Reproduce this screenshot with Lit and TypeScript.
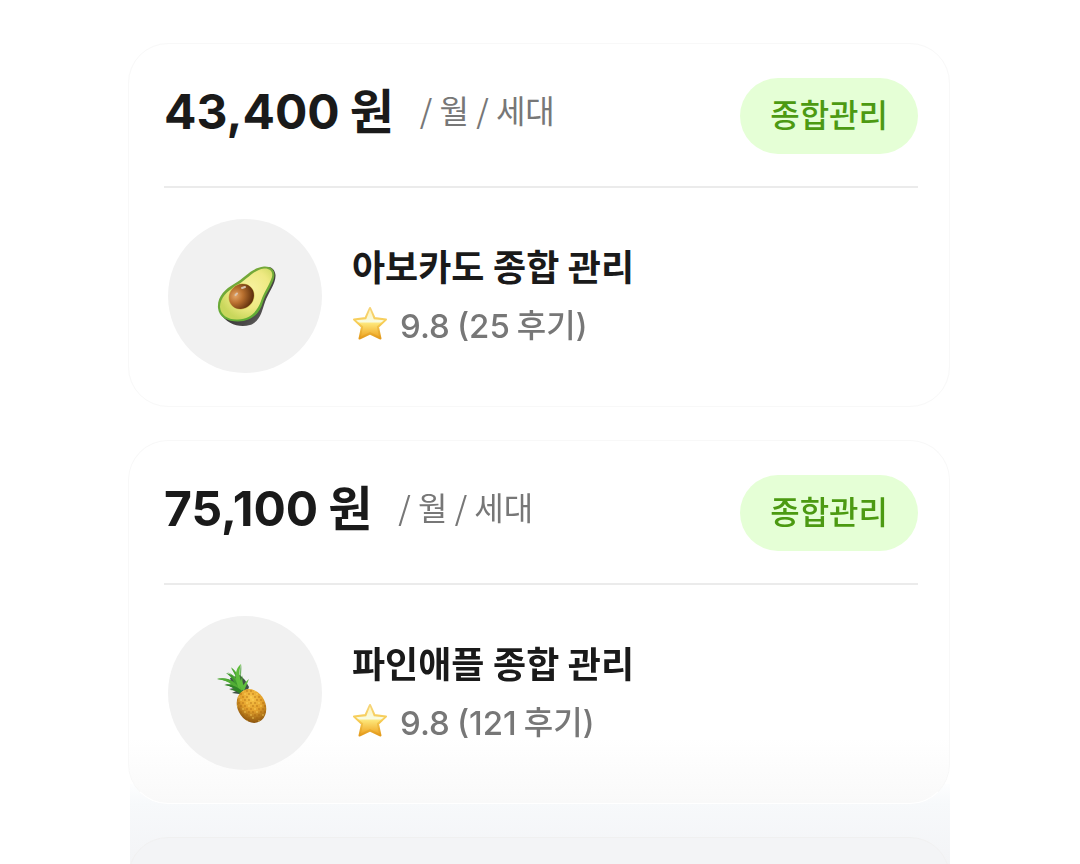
import { LitElement, html, css, svg, TemplateResult } from "lit";
import { customElement, property } from "lit/decorators.js";

interface Offer {
  price: string;
  name: string;
  score: string;
  reviews: number;
  art: TemplateResult;
}

const avocado = html`
  <svg viewBox="0 1 80 80" width="80" height="80" aria-hidden="true">
    <defs>
      <linearGradient id="skin" x1="0" y1="0" x2="1" y2="1">
        <stop offset="0.3" stop-color="#2d2b2b" />
        <stop offset="0.7" stop-color="#4b4948" />
        <stop offset="1" stop-color="#777" />
      </linearGradient>
      <linearGradient id="rim" x1="0.2" y1="0" x2="0.6" y2="1">
        <stop offset="0" stop-color="#7aa63a" />
        <stop offset="1" stop-color="#5fae35" />
      </linearGradient>
      <radialGradient id="flesh" cx="0.58" cy="0.4" r="0.62">
        <stop offset="0" stop-color="#f8f2a0" />
        <stop offset="0.6" stop-color="#eee982" />
        <stop offset="1" stop-color="#c9d75c" />
      </radialGradient>
      <radialGradient id="pit" cx="0.36" cy="0.3" r="0.75">
        <stop offset="0" stop-color="#e5a566" />
        <stop offset="0.4" stop-color="#b9702f" />
        <stop offset="1" stop-color="#562909" />
      </radialGradient>
    </defs>
    <path fill="url(#skin)" d="M15 58C22 69 34 73 45 70C56 66 57 55 60 47C63 38 71 29 70.500 20C70 15 67 12 63 12Z" />
    <path fill="url(#rim)" d="M13 53C12 42 20 34 29 29C41 22 46 13 59 11.500C66 11 71 15 69 23C67 31 61 38 58 47C55 58 47 66.500 33 66.500C22 66.500 14 62 13 53Z" />
    <path fill="url(#flesh)" d="M15 52C15 43 22 36 31 31C42 25 48 15 59 13.500C64 13 68.500 16 67 22C64 31 59 37 56 46C52 57 45 64 33 64.500C23 65 15.500 60 15 52Z" />
    <ellipse cx="36.500" cy="41.500" rx="13.500" ry="12.400" fill="#cfbc4c" transform="rotate(-45 36.500 41.500)" />
    <ellipse cx="36.500" cy="41.500" rx="13" ry="11.800" fill="url(#pit)" transform="rotate(-45 36.500 41.500)" />
    <path stroke="#d9c2ad" stroke-width="2" stroke-linecap="round" fill="none" d="M37 33L40 32M30.500 40L32 38.500" />
  </svg>
`;

const seeds = Array.from({ length: 96 }, (_, i) => {
  const row = Math.floor(i / 8);
  const col = i % 8;
  return svg`<circle
    cx=${32 + col * 4 + (row % 2) * 2}
    cy=${33 + row * 3}
    r="0.900"
    fill=${(row * 2 + col) % 3 ? "#a8640f" : "#ffdb66"}
  />`;
});

const pineapple = html`
  <svg viewBox="0 -2 80 80" width="80" height="80" aria-hidden="true">
    <defs>
      <radialGradient id="fruit" cx="0.62" cy="0.3" r="0.75">
        <stop offset="0" stop-color="#f9c548" />
        <stop offset="0.5" stop-color="#e3a02b" />
        <stop offset="1" stop-color="#86500c" />
      </radialGradient>
      <clipPath id="fruit-shape">
        <ellipse cx="46.500" cy="51" rx="14" ry="17.500" transform="rotate(-27 46.500 51)" />
      </clipPath>
    </defs>
    <path fill="#3f5145" d="M20 29L27 30L25 23L35 20L40 25L44 32L42 37L34 39L27 38L31 36L24 34L29 33Z" />
    <path fill="#3f9a2e" d="M35 38C29 33 24 30 19 30L27 29C23 26 18 25 12 24C19 22 25 24 29 27C27 23 24 20 21 18C27 19 31 22 33 27C31 22 29 17 26 13C31 16 34 21 36 27C35 20 35 15 36 9C37 16 35 20 37 26Z" />
    <path fill="#52ad35" d="M12 24C22 22 31 27 37 36L33 37C27 28 21 25 12 24ZM22 17C30 20 36 27 38 35L34 34C32 26 28 20 22 17ZM26 12C32 17 36 24 38 33H34C34 25 30 18 26 12Z" />
    <path fill="#5fbd3c" d="M36 9C30 14 29 22 34 34L38 33C35 24 33 18 36 9ZM34 31L39 36L44 24C39 28 37 32 37 36ZM38 20C35 26 35 31 38 36L40 33C37 28 37 24 38 20Z" />
    <path fill="#2f8426" d="M20 30C27 29 33 32 38 37L34 38C30 33 26 31 20 30ZM25 35C30 33 35 34 39 38L35 39C32 36 29 35 25 35Z" />
    <ellipse cx="46.500" cy="51" rx="14" ry="17.500" fill="url(#fruit)" transform="rotate(-27 46.500 51)" />
    <g clip-path="url(#fruit-shape)" opacity="0.5">${seeds}</g>
  </svg>
`;

const star = html`
  <svg class="star" viewBox="0 0 36 36" width="36" height="36" aria-hidden="true">
    <defs>
      <linearGradient id="gold" x1="0" y1="0" x2="0" y2="1">
        <stop offset="0" stop-color="#f6d478" />
        <stop offset="0.5" stop-color="#f7cd55" />
        <stop offset="1" stop-color="#e39a1c" />
      </linearGradient>
      <linearGradient id="shine" x1="0" y1="0" x2="0" y2="1">
        <stop offset="0" stop-color="#fff3b8" />
        <stop offset="0.45" stop-color="#f8fbe0" />
        <stop offset="0.52" stop-color="#fde577" />
        <stop offset="1" stop-color="#f0a928" />
      </linearGradient>
    </defs>
    <path fill="url(#gold)" stroke="url(#gold)" stroke-width="2" stroke-linejoin="round" d="M18 2L22.500 12L34 13.500L26 21L28.500 32.500L18 27.500L7.500 32.500L10 21L2 13.500L13.500 12Z" />
    <path fill="url(#shine)" d="M18 3.500L21.800 13.300L32 14.300L24.800 20.500L27 30.500L18 26L9 30.500L11.200 20.500L4 14.300L14.200 13.300Z" />
  </svg>
`;

const offers: Offer[] = [
  { price: "43,400", name: "아보카도 종합 관리", score: "9.8", reviews: 25, art: avocado },
  { price: "75,100", name: "파인애플 종합 관리", score: "9.8", reviews: 121, art: pineapple },
];

@customElement("offer-card")
export class OfferCard extends LitElement {
  @property({ attribute: false }) offer!: Offer;

  static styles = css`
    :host {
      display: block;
      color: #1a1a1a;
    }
    .head {
      display: flex;
      justify-content: space-between;
      align-items: flex-start;
      padding-bottom: 32px;
      border-bottom: 2px solid #ebebeb;
    }
    .cost {
      display: flex;
      align-items: flex-start;
      gap: 26px;
      margin: 0;
      line-height: 68px;
    }
    .price {
      display: flex;
      align-items: baseline;
      gap: 10px;
      font-size: 48px;
      font-weight: 700;
    }
    .per {
      font-family: "Noto Sans CJK KR", sans-serif;
      font-size: 32px;
      line-height: 62px;
      color: #777;
    }
    .tag {
      padding: 0 30px;
      border-radius: 38px;
      background: #e5ffd6;
      color: #4c9a12;
      font-size: 32px;
      font-weight: 500;
      line-height: 76px;
    }
    .body {
      display: flex;
      align-items: center;
      gap: 30px;
      padding: 31px 0 0 4px;
    }
    .avatar {
      display: grid;
      place-items: center;
      flex: none;
      width: 154px;
      height: 154px;
      border-radius: 50%;
      background: #f1f1f1;
    }
    .name {
      margin: 0;
      font-size: 36px;
      font-weight: 700;
      line-height: 60px;
    }
    .rating {
      display: flex;
      align-items: center;
      gap: 12px;
      margin: 0;
      font-size: 33px;
      font-weight: 500;
      line-height: 56px;
      color: #777;
    }
    .star {
      margin-bottom: 4px;
    }
    .score {
      display: flex;
      gap: 7px;
    }
    .unit {
      font-size: 32px;
    }
  `;

  render() {
    const { price, name, score, reviews, art } = this.offer;
    return html`
      <div class="head">
        <p class="cost">
          <span class="price"><span>${price}</span><span>원</span></span>
          <span class="per">/ 월 / 세대</span>
        </p>
        <span class="tag">종합관리</span>
      </div>
      <div class="body">
        <div class="avatar">${art}</div>
        <div>
          <h2 class="name">${name}</h2>
          <p class="rating">
            ${star}
            <span class="score"><span>${score}</span><span>(${reviews}</span><span class="unit">후기)</span></span>
          </p>
        </div>
      </div>
    `;
  }
}

@customElement("app-root")
export class AppRoot extends LitElement {
  static styles = css`
    :host {
      display: block;
      height: 100vh;
      overflow: hidden;
      background: #fff;
      font-family: Inter, "Noto Sans CJK KR", sans-serif;
    }
    .list {
      display: flex;
      flex-direction: column;
      gap: 33px;
      box-sizing: border-box;
      width: 100%;
      max-width: 864px;
      margin: 0 auto;
      padding: 43px 22px 0 20px;
      position: relative;
      z-index: 0;
    }
    .list::after {
      content: "";
      position: fixed;
      bottom: 0;
      left: 50%;
      z-index: -1;
      width: 820px;
      max-width: 100%;
      height: 80px;
      transform: translateX(-50%);
      background: linear-gradient(#fdfeff, #f7f9fb 24%, #f3f4f6);
    }
    .card {
      padding: 34px 31px 33px 35px;
      border: 1px solid #f8f8f8;
      border-radius: 40px;
      background: #fff;
    }
    .card:nth-child(2) {
      border-bottom-color: #fff;
      background: linear-gradient(#fff 82%, #f9f9f9);
    }
    .next {
      height: 80px;
      border-color: #f0f0f0;
      background: #f3f4f6;
    }
  `;

  render() {
    return html`
      <main class="list">
        ${offers.map((offer) => html`<article class="card"><offer-card .offer=${offer}></offer-card></article>`)}
        <div class="card next"></div>
      </main>
    `;
  }
}
